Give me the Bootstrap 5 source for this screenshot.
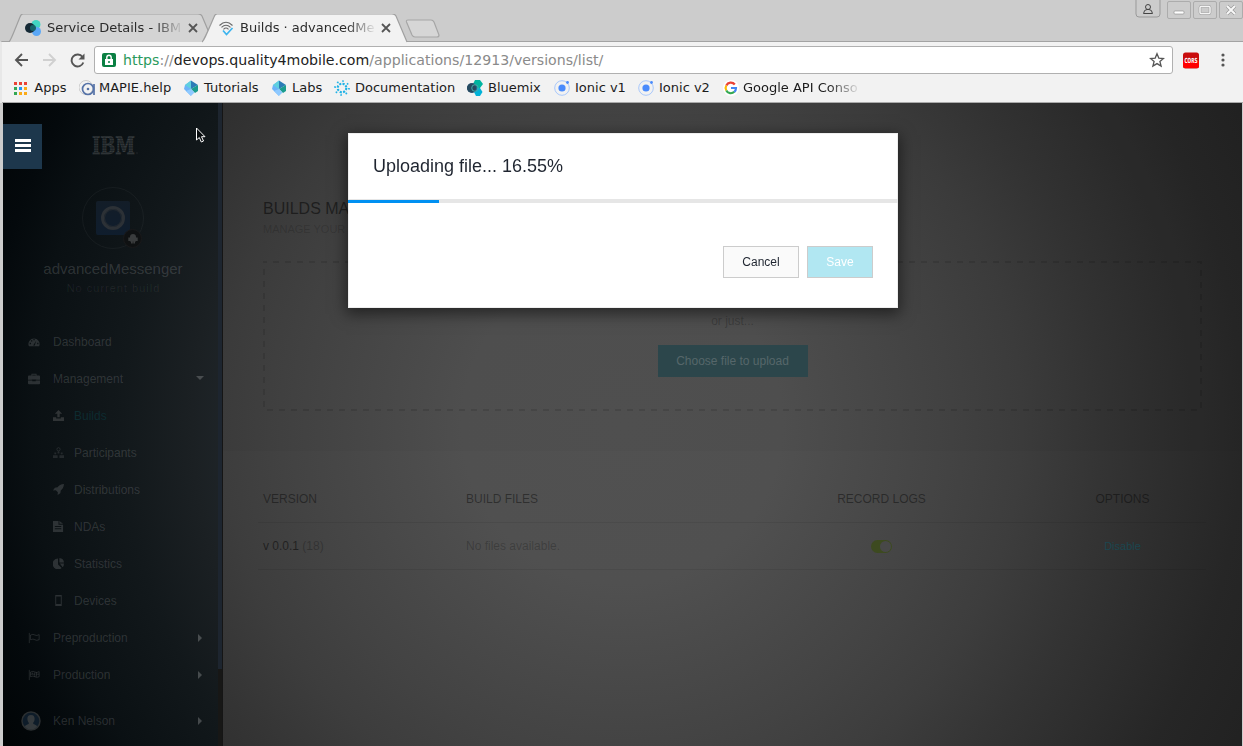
<!DOCTYPE html>
<html lang="en">
<head>
<meta charset="utf-8">
<title>Builds · advancedMessenger</title>
<link rel="stylesheet" href="https://cdn.jsdelivr.net/npm/bootstrap@5.3.0/dist/css/bootstrap.min.css">
<style>
body{height:746px;overflow:hidden;background:#ccc;font:12px/16px "Liberation Sans",Arial,sans-serif;color:#000}
svg{display:block;flex:none}
.chrome{font-family:"DejaVu Sans",sans-serif;font-size:13px;color:#2b2b2b}
.strip{height:42px;background:#ccc;padding-left:8px}
.tab{height:28px;margin-top:14px;width:204px;padding-left:17px}
.tab>.shape{position:absolute;left:0;top:0;z-index:0}
.tab>*{position:relative}
.tab+.tab{margin-left:-10px;z-index:2}
.ttl{width:141px;white-space:nowrap;margin-left:6px;-webkit-mask-image:linear-gradient(90deg,#000 106px,transparent 137px)}
.wbtn{width:24px;height:18px;border:1px solid #acacac;border-radius:2px;margin-top:1px}
.tools{height:34px;background:#f2f2f2;padding-top:4px}
.url{width:1079px;height:28px;margin-left:9px;background:#fff;border:1px solid #b0b0b0;border-radius:3px;font-size:14.15px;color:#8a8a8a;padding-left:7px;padding-right:7px}
.url .txt{margin-left:7px}
.marks{height:27px;background:#f2f2f2;display:grid;grid-template-columns:65px 105px 88px 62px 133px 87px 84px 85px 140px;padding-left:13px;border-bottom:1px solid #aaa;color:#1c1c1c;white-space:nowrap;padding-bottom:2px}
.marks>div{display:flex;align-items:center;gap:4px}
.fade-end{-webkit-mask-image:linear-gradient(90deg,#000 105px,transparent 138px)}
.frame{border-left:3px solid #e8e8e8;box-shadow:inset 1px 0 #999;background:#f2f2f2}
.page{height:643px;margin-left:3px;margin-right:1px}
.side{width:220px;background:radial-gradient(circle at 622px 424px,#23292d 0,#1f2529 390px,#1b2023 430px,#12181b 500px,#0a1013 590px,#04090c 640px,#000304 710px) fixed;color:rgba(255,255,255,.14)}
.scroller{width:5px;right:0;top:0;height:100%;background:#171716;border-right:1px solid #151515}
.scroller i{display:block;height:566px;background:#1d252f}
.burger{position:absolute;left:0;top:21px;width:39px;height:45px;background:#1d374c}
.burger i{display:block;width:16px;height:3px;background:#fff;margin-bottom:2px}
.logo{margin:33px auto 0}
.app{width:62px;height:62px;border:1px solid rgba(255,255,255,.045);border-radius:50%;margin-top:31px}
.appico{width:34px;height:34px;background:linear-gradient(#131d28,#0f1d2d);border-radius:2px}
.droid{position:absolute;left:40px;top:41px;width:19px;height:19px;border-radius:50%;background:#0f1112;border:1px solid #19191a}
.nm{font-size:15px;line-height:18px;margin-top:11px;color:rgba(255,255,255,.15)}
.sub{font-size:11px;letter-spacing:1px;line-height:14px;margin-top:3px;color:rgba(255,255,255,.07);text-indent:1px}
.items{margin-top:28px}
.it{height:37px;display:flex;align-items:center;padding-left:25px;padding-right:19px}
.it>svg:first-child{width:12px;height:12px;margin-right:13px;fill:currentColor}
.it.lv2{padding-left:50px}
.it.lv2>svg:first-child{width:11px;height:11px;margin-right:10px}
.it .car{margin-left:auto}
.on{color:#0d2b30}
.on svg{color:#303436}
.main{background:radial-gradient(circle at 622px 424px,#515151 0,#505050 160px,#4b4b4b 225px,#434343 330px,#3d3d3d 400px,#343434 480px,#2d2d2d 550px,#262626 620px,#212121 710px) fixed}
.hero{height:348px;background:rgba(0,0,0,.025);padding:97px 40px 0 40px}
.hero h1{font-size:16px;line-height:18px;margin:0;color:rgba(0,0,0,.5)}
.hero h2{font-size:11px;line-height:14px;margin:4px 0 25px;color:rgba(0,0,0,.17)}
.drop{height:150px;padding-top:52px;position:relative}
.drop>svg{position:absolute;left:0;top:0}
.just{color:rgba(0,0,0,.23)}
.choose{width:150px;height:32px;line-height:32px;background:#2c464b;color:#56666a;margin-top:16px;border-radius:0}
.vers{margin:0 36px 0 35px}
.vrow{display:grid;grid-template-columns:203px 265px 301px 1fr;height:47px;align-items:center;border-bottom:1px solid rgba(0,0,0,.07);padding-left:5px}
.vrow>:last-child{padding-left:7px}
.vrow.hd{margin-top:25px;color:rgba(0,0,0,.42)}
.sw{width:21px;height:13px;border-radius:7px;background:#3d4a20;padding:1px}
.sw i{display:block;width:11px;height:11px;border-radius:50%;background:#484848;margin-left:auto}
.modal{padding-left:3px}
.modal-dialog{max-width:550px;margin:133px auto 0}
.modal-content{height:175px;border:1px solid #eee;border-radius:0;box-shadow:0 4px 14px 2px rgba(0,0,0,.5);background:#fff;color:#1f2530}
.mt{font-size:18px;line-height:22px;padding:21px 24px 0;height:65px}
.progress{height:4px;border-radius:0;background:#e6e6e6;margin:0 -1px}
.progress-bar{background:#0090f2;height:3px;margin-top:1px}
.acts{margin-top:43px;padding-right:24px}
.acts .btn{font-size:12px;line-height:30px;height:32px;padding:0;border-radius:0;border:1px solid #ccc}
.cancel{width:76px;background:#fafafa;color:#1f2530}
.save{width:66px;background:#b1e7f2;color:#fff}
.pointer{position:absolute;left:195px;top:127px;z-index:5}
</style>
<script src="https://cdn.jsdelivr.net/npm/bootstrap@5.3.0/dist/js/bootstrap.bundle.min.js"></script>
</head>
<body>
<header class="chrome">
 <div class="strip d-flex">
  <div class="tab d-flex align-items-center position-relative">
   <svg class="shape" width="206" height="28"><path d="M1 28C3 26 3 25 12 3Q13 0 15 0H190Q193 0 194 2L205 28" fill="#d4d4d4" stroke="#a0a0a0" stroke-width="1.2"/></svg>
   <svg width="16" height="16"><circle cx="11" cy="4.500" r="4.500" fill="#41d6c3"/><circle cx="11.500" cy="11.500" r="4.500" fill="#5aa7f6"/><circle cx="5" cy="8" r="5" fill="#152935"/><circle cx="8" cy="8" r="3" fill="#16656b"/></svg>
   <div class="ttl">Service Details - IBM</div>
   <svg width="10" height="10"><path d="M1 1l8 8M9 1l-8 8" stroke="#555" stroke-width="1.800"/></svg>
  </div>
  <div class="tab d-flex align-items-center position-relative">
   <svg class="shape" width="206" height="29"><path d="M0 28C2 26 3 24 12 3Q13 0 15 0H190Q193 0 194 2L205 28V29H0z" fill="#f2f2f2"/><path d="M0 28C2 26 3 24 12 3Q13 0 15 0H190Q193 0 194 2L205 28" fill="none" stroke="#a0a0a0" stroke-width="1.200"/></svg>
   <svg width="15" height="16" fill="none" stroke="#666" stroke-width="1.100"><path d="M.5 5.500Q7-1 13.500 5.500M2.500 7.300q4.500-4 9 0M4.500 9.300q2.500-2.500 5 0"/><path d="M4 10.500l3.500 4L13.500 8" stroke="#3db4ee" stroke-width="1.700"/></svg>
   <div class="ttl">Builds · advancedMe</div>
   <svg width="10" height="10"><path d="M1 1l8 8M9 1l-8 8" stroke="#555" stroke-width="1.800"/></svg>
  </div>
  <svg width="36" height="20" style="margin:19px 0 0 -1px"><path d="M3 1H26Q28 1 29 3L34 16Q34 18 32 18H10Q8 18 7 16L1.500 3Q1 1 3 1z" fill="#d6d6d6" stroke="#a6a6a6" stroke-width="1.200"/></svg>
  <div class="d-flex ms-auto" style="gap:2px">
   <svg width="26" height="19" class="me-1"><path d="M1 0V14Q1 17 4 17H22Q25 17 25 14V0" fill="none" stroke="#999"/><g fill="none" stroke="#444"><circle cx="13" cy="7" r="2.500"/><path d="M8.500 13.500Q9 9.500 12 9.500H14Q17 9.500 17.500 13.500z"/></g></svg>
   <div class="wbtn"><svg width="22" height="16"><rect x="6" y="9" width="10" height="3" rx="1" fill="#fff" stroke="#888" stroke-width=".6"/></svg></div>
   <div class="wbtn"><svg width="22" height="16"><rect x="6" y="4.500" width="10" height="7" rx="1" fill="none" stroke="#999" stroke-width="2.600"/><rect x="6" y="4.500" width="10" height="7" rx="1" fill="none" stroke="#f4f4f4" stroke-width="1.500"/></svg></div>
   <div class="wbtn"><svg width="22" height="16"><path d="M7 4l8 8M15 4l-8 8" stroke="#999" stroke-width="3.300"/><path d="M7 4l8 8M15 4l-8 8" stroke="#f8f8f8" stroke-width="2"/></svg></div>
  </div>
 </div>
 <div class="frame" style="margin-top:-1px;border-top:1px solid #a3a3a3;border-left-width:2px">
 <div class="tools d-flex" style="padding-left:12px">
  <div class="d-flex align-items-center" style="height:28px;gap:14px">
   <svg width="15" height="14" fill="none" stroke="#555" stroke-width="1.900"><path d="M14 7H2M8 1L2 7l6 6"/></svg>
   <svg width="14" height="14" fill="none" stroke="#d0d0d0" stroke-width="1.900"><path d="M0 7H12M6 1l6 6-6 6"/></svg>
   <svg width="15" height="15" fill="none" stroke="#555" stroke-width="1.900" style="margin-left:-1px"><path d="M12.500 4A6 6 0 1 0 13.300 9.500"/><path d="M14.500 .5V6.500H8.500z" fill="#555" stroke="none"/></svg>
  </div>
  <div class="url d-flex align-items-center">
   <svg width="14" height="14"><rect width="14" height="14" rx="2" fill="#0b8043"/><path d="M4.800 6V4.500a2.200 2.200 0 0 1 4.400 0V6" fill="none" stroke="#fff" stroke-width="1.400"/><path d="M3 6h8v6H3z" fill="#fff"/><circle cx="7" cy="9" r="1" fill="#0b8043"/></svg>
   <div class="txt"><span style="color:#2a9a5c">https</span>://<span style="color:#222">devops.quality4mobile.com</span>/applications/12913/versions/list/</div>
   <svg width="16" height="16" class="ms-auto"><path d="M8 1.800l1.800 4.300 4.700.4-3.600 3 1.200 4.600L8 11.600 3.900 14.100l1.200-4.600-3.600-3 4.700-.4z" fill="none" stroke="#555" stroke-width="1.300"/></svg>
  </div>
  <div class="d-flex align-items-center" style="height:28px;margin-left:10px">
   <svg width="17" height="17"><rect width="16" height="16" y=".5" rx="2.500" fill="#c90d0d"/><path d="M0 9h16v5q0 2-2 2H2Q0 16 0 14z" fill="#f00"/><text x="1.500" y="11" font-size="7" font-weight="bold" fill="#fff" textLength="13" lengthAdjust="spacingAndGlyphs">CORS</text></svg>
   <svg width="4" height="14" fill="#555" style="margin-left:21px"><circle cx="2" cy="2" r="1.600"/><circle cx="2" cy="7" r="1.600"/><circle cx="2" cy="12" r="1.600"/></svg>
  </div>
 </div>
 <div class="marks" style="padding-left:12px">
  <div><svg width="15" height="15"><path d="M0 1h3v3H0z" fill="#ea4335"/><path d="M5 1h3v3H5zM10 1h3v3h-3z" fill="#ea4335"/><path d="M0 6h3v3H0z" fill="#34a853"/><path d="M5 6h3v3H5z" fill="#2196f3"/><path d="M10 6h3v3h-3zM10 11h3v3h-3zM5 11h3v3H5z" fill="#fbab18"/><path d="M0 11h3v3H0z" fill="#34a853"/></svg>&#8202;Apps</div>
  <div><svg width="16" height="16" fill="none"><circle cx="7" cy="7.500" r="7" stroke="#ccc"/><circle cx="9" cy="9" r="5.500" stroke="#5572a7" stroke-width="1.700"/><path d="M15 4v11" stroke="#5572a7" stroke-width="1.700"/><circle cx="9" cy="9" r="1.300" fill="#5572a7"/></svg>MAPIE.help</div>
  <div><svg width="16" height="16"><path d="M7 .5L1 5 0 9l7 7V9z" fill="#6bb3f8"/><path d="M7 .5L1 5l6 4z" fill="#5ed0de"/><path d="M7 .5L14 5 7 9z" fill="#2b7cb7"/><path d="M7 9l7-4v6l-3 2z" fill="#1a9c8e"/><path d="M7 9l3.500 3.500L7 16 2 11z" fill="#8ec9ff"/></svg>Tutorials</div>
  <div><svg width="16" height="16"><path d="M7 .5L1 5 0 9l7 7V9z" fill="#6bb3f8"/><path d="M7 .5L1 5l6 4z" fill="#5ed0de"/><path d="M7 .5L14 5 7 9z" fill="#2b7cb7"/><path d="M7 9l7-4v6l-3 2z" fill="#1a9c8e"/><path d="M7 9l3.500 3.500L7 16 2 11z" fill="#8ec9ff"/></svg>Labs</div>
  <div><svg width="17" height="17" fill="none" stroke="#1fb2e6"><circle cx="8" cy="8" r="4.300" stroke-width="2.200" stroke-dasharray="2.100 1.277"/><circle cx="8" cy="8" r="7" stroke-width="1.700" stroke-dasharray="1.600 3.898"/></svg>Documentation</div>
  <div><svg width="17" height="16"><path d="M8 0h5l3 4-3 4H8L6 4z" fill="#00b4a0"/><path d="M9 8h4l2.500 4L13 16H9l-2-4z" fill="#00b2d8"/><circle cx="5" cy="8" r="5" fill="#325c80"/><circle cx="4.500" cy="8" r="4.500" fill="#264a60"/><circle cx="8" cy="8" r="3.300" fill="none" stroke="#4aa"/></svg>Bluemix</div>
  <div><svg width="17" height="16"><circle cx="8" cy="8" r="7.300" fill="none" stroke="#a9c8fb"/><circle cx="8" cy="8" r="3.600" fill="#4a8bfc"/><circle cx="13.500" cy="2.500" r="1.400" fill="#4a8bfc"/></svg>Ionic v1</div>
  <div><svg width="17" height="16"><circle cx="8" cy="8" r="7.300" fill="none" stroke="#a9c8fb"/><circle cx="8" cy="8" r="3.600" fill="#4a8bfc"/><circle cx="13.500" cy="2.500" r="1.400" fill="#4a8bfc"/></svg>Ionic v2</div>
  <div class="fade-end overflow-hidden"><svg width="16" height="16" fill="none" stroke-width="2.200"><circle cx="8" cy="8" r="8" fill="#fff"/><path d="M3.300 5.500A5 5 0 0 1 11.800 4.500" stroke="#ea4335"/><path d="M3.300 5.500a5 5 0 0 0 0 5" stroke="#fbbc05"/><path d="M3.300 10.500a5 5 0 0 0 8 1.300" stroke="#34a853"/><path d="M11.300 11.800A5 5 0 0 0 13 8H8" stroke="#4285f4"/></svg>Google API Conso</div>
 </div></div>
</header>

<div class="page d-flex">
 <aside class="side position-relative flex-shrink-0">
  <div class="burger d-flex flex-column align-items-center" style="padding-top:15px"><i></i><i></i><i></i></div>
  <div class="scroller position-absolute"><i></i></div>
  <svg class="logo" width="46" height="20" style="margin-left:89px"><defs><pattern id="bars" width="46" height="2.400" patternUnits="userSpaceOnUse"><path d="M0 .3h46v1.700H0z" fill="#fff" fill-opacity=".14"/></pattern></defs><text x="0" y="17.500" font-family="DejaVu Serif,serif" font-weight="bold" font-size="23.500" fill="url(#bars)" stroke="url(#bars)" stroke-width=".8" textLength="43" lengthAdjust="spacingAndGlyphs">IBM</text><circle cx="45" cy="17" r=".7" fill="#272b2d"/></svg>
  <div class="app position-relative d-flex align-items-center justify-content-center" style="margin-left:79px">
   <div class="appico d-flex align-items-center justify-content-center"><svg width="26" height="26" fill="none"><circle cx="13" cy="13" r="10.500" stroke="#2c3136" stroke-width="3"/><circle cx="13" cy="13" r="8.500" stroke="#252b31" stroke-width="1"/></svg></div>
   <div class="droid d-flex align-items-center justify-content-center"><svg width="10" height="11" fill="#3a3c3d"><path d="M2 4a3 3 0 0 1 6 0zM2 4h6V8.500H2zM.3 4.500h1.700V8H.3zM8 4.500h1.700V8H8zM3 8h1.800v2.500H3zM5.300 8H7v2.500H5.300z"/></svg></div>
  </div>
  <div class="nm text-center">advancedMessenger</div>
  <div class="sub text-center">No current build</div>
  <nav class="items">
   <div class="it"><svg viewBox="0 0 14 12"><path fill-rule="evenodd" d="M1 11A6.500 6.500 0 1 1 13 11zM6 10h2l1.500-5.500zM2 7v1.500h1.500V7zM3.500 4v1.500H5V4zM6.300 2.500V4h1.500V2.500zM10.700 7v1.500h1.500V7z"/></svg>Dashboard</div>
   <div class="it"><svg viewBox="0 0 14 12"><path fill-rule="evenodd" d="M4 2V0h6v2h3q1 0 1 1v4H9.500V6.500h-5V7H0V3q0-1 1-1zM5 2h4V1H5zM0 7.700h5v1h4v-1h5V11q0 1-1 1H1q-1 0-1-1z"/></svg>Management<svg class="car" width="8" height="5"><path d="M0 0h8L4 4z" fill="#fff" fill-opacity=".2"/></svg></div>
   <div class="it lv2 on"><svg viewBox="0 0 12 12"><path d="M6 0l4 4H7.300v4H4.700V4H2zM0 8h3.500v1.300h5V8H12v4H0z"/></svg>Builds</div>
   <div class="it lv2"><svg viewBox="0 0 12 12" opacity=".7"><circle cx="6" cy="2.500" r="1.800" fill="none" stroke="currentColor"/><path d="M5 5h2v2H5zM0 9h5v3H0zM7 9h5v3H7zM1.500 6h2v2h-2zM8.500 6h2v2h-2z"/></svg>Participants</div>
   <div class="it lv2"><svg viewBox="0 0 12 12"><path d="M12 0Q7 .5 5 3.500L2 4 0 7l3-.3 2.300 2.300L5 12l3-2 .5-3Q11.500 5 12 0z"/></svg>Distributions</div>
   <div class="it lv2"><svg viewBox="0 0 12 12"><path fill-rule="evenodd" d="M0 0h6v4h5v8H0zM7 0l4 3H7zM2 5.500v1h7v-1zM2 8v1h7V8z"/></svg>NDAs</div>
   <div class="it lv2"><svg viewBox="0 0 12 12"><path d="M5.500.5V7l4 4A6 6 0 1 1 5.500.5zM7 0a5.500 5.500 0 0 1 5 5H7zM7.500 6H12q0 2.500-1.500 4z"/></svg>Statistics</div>
   <div class="it lv2"><svg viewBox="0 0 12 12"><path fill-rule="evenodd" d="M2.500 0h7v12h-7zM3.500 1.500v8.300h5V1.500z"/></svg>Devices</div>
   <div class="it"><svg viewBox="0 0 14 12"><path d="M1.500 0v12M3 2.500q3-1.500 5 0t5-.5v6q-3 1.500-5 0T3 8z" fill="none" stroke="currentColor"/></svg>Preproduction<svg class="car" width="8" height="8"><path d="M2 0v8L6 4z" fill="#fff" fill-opacity=".22"/></svg></div>
   <div class="it"><svg viewBox="0 0 14 12"><path d="M1.500 0v12M3 2.500q3-1.500 5 0t5-.5v6q-3 1.500-5 0T3 8zM3 5l5 0M8 3v5M10 5h3M5 3v2M10 3v5" fill="none" stroke="currentColor"/></svg>Production<svg class="car" width="8" height="8"><path d="M2 0v8L6 4z" fill="#fff" fill-opacity=".22"/></svg></div>
   <div class="it" style="margin-top:9px;padding-left:18px"><svg viewBox="0 0 20 20" style="width:20px;height:20px;margin-right:12px"><circle cx="10" cy="10" r="9" fill="#0e1c29" stroke="#2b2f31" stroke-width="1.500"/><path d="M10 4c5 0 4 6 2 8 0 2 4 1 4 4q-6 5-12 0c0-3 4-2 4-4C6 10 5 4 10 4z" fill="#34393c"/></svg>Ken Nelson<svg class="car" width="8" height="8"><path d="M2 0v8L6 4z" fill="#fff" fill-opacity=".22"/></svg></div>
  </nav>
 </aside>
 <main class="main flex-grow-1">
  <section class="hero">
   <h1>BUILDS MANAGEMENT</h1>
   <h2>MANAGE YOUR BUILDS</h2>
   <div class="drop d-flex flex-column align-items-center">
    <svg width="100%" height="150"><rect x="1" y="1" width="937" height="148" fill="none" stroke="#000" stroke-opacity=".11" stroke-width="2" stroke-dasharray="6 6" stroke-dashoffset="3"/></svg>
    <div class="just">or just...</div>
    <div class="choose text-center">Choose file to upload</div>
   </div>
  </section>
  <section class="vers">
   <div class="vrow hd"><div>VERSION</div><div>BUILD FILES</div><div class="text-center">RECORD LOGS</div><div class="text-center">OPTIONS</div></div>
   <div class="vrow"><div style="color:rgba(0,0,0,.25)"><span style="color:rgba(0,0,0,.5)">v 0.0.1</span> (18)</div><div style="color:rgba(0,0,0,.23)">No files available.</div><div class="d-flex justify-content-center"><div class="sw"><i></i></div></div><div class="text-center" style="font-size:11px;color:#1b464f">Disable</div></div>
  </section>
 </main>
</div>

<div class="modal d-block"><div class="modal-dialog"><div class="modal-content">
 <div class="mt">Uploading file... 16.55%</div>
 <div class="progress"><div class="progress-bar" style="width:16.55%"></div></div>
 <div class="acts d-flex justify-content-end gap-2"><button class="btn cancel">Cancel</button><button class="btn save">Save</button></div>
</div></div></div>
<svg class="pointer" width="12" height="18"><path d="M1.500 1v12l2.800-2.500 2 4.500 2.200-1-2-4.300H10z" fill="#080c0e" stroke="#fff"/></svg>
</body>
</html>
